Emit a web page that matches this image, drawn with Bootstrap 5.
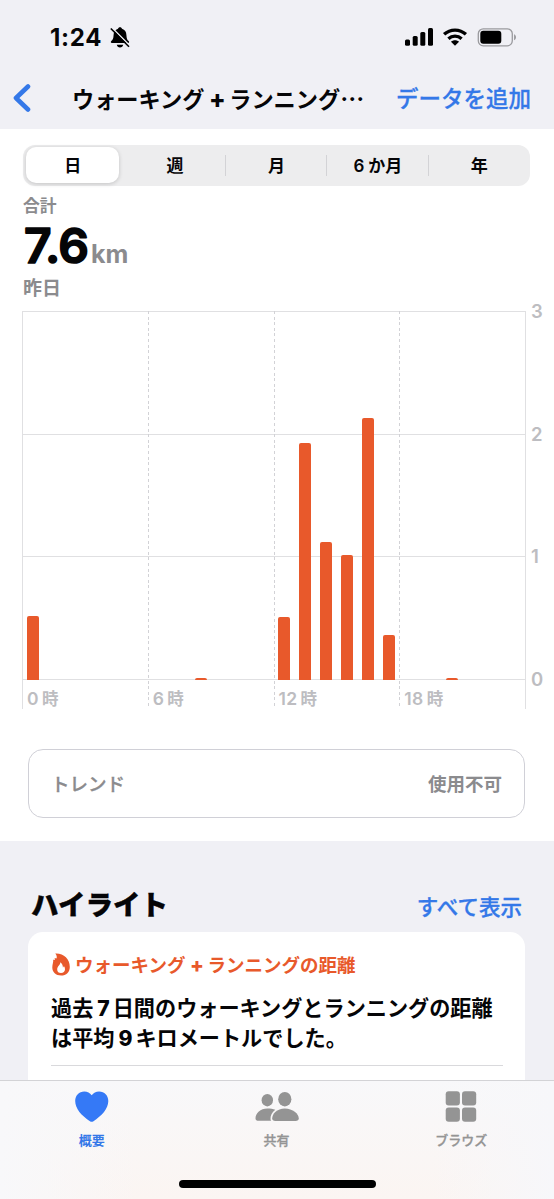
<!DOCTYPE html>
<html lang="ja">
<head>
<meta charset="utf-8">
<meta name="viewport" content="width=device-width, initial-scale=1">
<title>ウォーキング+ランニングの距離</title>
<link rel="stylesheet" href="https://cdn.jsdelivr.net/npm/bootstrap@5.3.0/dist/css/bootstrap.min.css">
<style>
:root { --ink:#050507; --blue:#3478e8; --orange:#e8592b; --panel:#f0f0f5; --muted:#8b8b8e; --axis:#bdbdc1; --rule:#e0e0e2; }
body { font-family: Inter, "Noto Sans CJK JP", sans-serif; color: var(--ink); background: #fff; line-height: 1; }
svg { display: block; flex: none; }
.screen { width: 554px; height: 1199px; overflow: hidden; }
.top-area { background: var(--panel); height: 129px; flex: none; }
.status { height: 70px; padding: 4px 37px 0 50px; }
.clock { font-size: 24px; font-weight: 700; letter-spacing: .75px; width: 60px; white-space: nowrap; padding-top: 1px; }
.title-bar { height: 59px; padding: 0 23px 4px 13px; }
.page-title { font-size: 22.2px; font-weight: 700; margin-left: 41px; padding-top: 2px; white-space: nowrap; }
.plus { margin: 0 3.5px 0 4.5px; font-weight: 800; font-size: 1.1em; line-height: 1; }
.dots { font-family: "Noto Sans CJK JP", sans-serif; font-size: 24px; line-height: 1; }
.blue { color: var(--blue); }
.orange { color: var(--orange); }
.muted { color: var(--muted); }
.medium { font-weight: 500; -webkit-text-stroke: .3px currentColor; }
.bold { font-weight: 700; }
.add-link { font-size: 22.5px; padding-top: 3px; white-space: nowrap; }
.segments { margin: 16px 24px 0 23px; height: 41px; border-radius: 12px; background: #ededee; font-size: 17px; font-weight: 600; flex: none; }
.segment { display: flex; align-items: center; justify-content: center; padding: 2px 0 0; }
.segment.split { background: linear-gradient(#d3d3d6,#d3d3d6) right center / 1px 21px no-repeat; }
.segment.on { background: #fff; margin: 2px 5px 3px 3px; border-radius: 10px; box-shadow: 0 1px 4px rgba(0,0,0,.18); }
.total { padding-left: 23px; height: 125px; flex: none; }
.total svg { overflow: visible; }
.total-value { font-size: 48px; font-weight: 600; stroke: var(--ink); stroke-width: 1.6; stroke-linejoin: round; fill: var(--ink); }
.total-unit { font-size: 25px; font-weight: 700; fill: var(--muted); }
.chart-wrap { height: 399px; padding-left: 22px; flex: none; }
.chart { display: grid; width: 504px; height: 398px; grid-template: 369px 29px / 1fr; }
.rows { grid-area: 1/1; display: grid; grid-template-rows: repeat(3,1fr); border-bottom: 1px solid var(--rule); }
.rows div { border-top: 1px solid var(--rule); }
.quarters { grid-area: 1/1/3/2; display: grid; grid-template-columns: repeat(4,1fr); border-right: 1px solid var(--rule); }
.quarter { padding: 379px 0 0 5px; font-size: 17.5px; font-weight: 600; letter-spacing: .4px; color: var(--axis); background: repeating-linear-gradient(#d2d2d6 0 3px, transparent 3px 5.6px) left top / 1px 100% no-repeat; white-space: nowrap; }
.quarter:first-child { background: linear-gradient(var(--rule),var(--rule)) left top / 1px 100% no-repeat; }
.quarter span { margin-left: 3px; font-size: 16.5px; }
.bars { grid-area: 1/1; display: grid; grid-template-columns: repeat(24,1fr); align-items: end; padding: 0 1px; z-index: 1; height: 369px; }
.bar { width: 12px; margin-left: 4.3px; background: var(--orange); border-radius: 2px 2px 0 0; }
.scale { height: 385px; width: 28px; margin-top: -8px; padding-left: 5px; font-size: 18.5px; font-weight: 600; color: #bdbdc1; line-height: 17px; }
.trend { margin: 39px 29px 0 28px; height: 69px; border: 1.5px solid #d0d0d7; border-radius: 15px; padding: 1px 22px 0; font-size: 18.5px; flex: none; }
.highlights { margin-top: 23px; background: var(--panel); height: 239px; overflow: hidden; flex: none; }
.heading-row { height: 91px; padding: 38px 32px 0 31px; }
.heading-row h2 { font-size: 27.5px; font-weight: 900; margin: 0; line-height: 52px; -webkit-text-stroke: .4px currentColor; }
.heading-row a { font-size: 21.5px; line-height: 57px; text-decoration: none; }
.summary { margin: 0 29px 0 28px; height: 160px; border-radius: 15px 15px 0 0; background: #fff; padding: 20px 22px 0 23px; }
.summary-title { font-size: 18.5px; font-weight: 700; height: 25px; white-space: nowrap; }
.summary-title .label-text { padding-top: 1px; }
.summary p { font-size: 21.15px; font-weight: 700; line-height: 30px; margin: 17px 0 0; padding-bottom: 11px; border-bottom: 1px solid #d9d9dc; white-space: nowrap; height: 72px; }
.num { margin: 0 3px 0 4px; font-weight: 800; }
.tabs { height: 119px; flex: none; border-top: 1px solid #d3d3d6; background: linear-gradient(90deg, #f8f8fa 0, rgba(248,248,250,0) 25% 78%, #f7f7fa), linear-gradient(#f8f8fa, #fbf5f2); }
.tab { height: 80px; padding: 8px 1px 0 0; font-size: 13px; color: #949494; }
.tab.current { color: var(--blue); }
.tab svg { margin-bottom: 9px; }
.indicator { width: 197px; height: 8px; border-radius: 4px; background: #000; margin: 19px auto 0; }
</style>
</head>
<body>
<main class="screen d-flex flex-column">
  <header class="top-area">
    <div class="status d-flex align-items-center">
      <div class="clock">1:24</div>
      <svg width="20" height="21" viewBox="0 0 20 21"><path d="M10 .3c1.100 0 1.800.7 2 1.500 2.900.9 4.300 3 4.400 6.100.2 3.400.8 5 2.200 6.200.9.8.6 2-.5 2H1.900c-1.100 0-1.500-1.200-.6-2C2.900 12.700 3.400 11.200 3.600 7.900 3.700 4.800 5.100 2.700 8 1.800c.2-.8.9-1.500 2-1.500zM6.800 17.800h6.400c-.2 1.600-1.500 2.600-3.200 2.600s-3-1-3.200-2.600z" fill="#000"/><path d="M2 .8 19.500 18.300" stroke="#f0f0f5" stroke-width="1.500"/><path d="M.8 1.500 19 19.700" stroke="#000" stroke-width="1.600"/></svg>
      <div class="d-flex align-items-center ms-auto">
        <svg width="28" height="18" viewBox="0 0 28 18"><g fill="#000"><rect x="0" y="11.500" width="5" height="6.300" rx="1.500"/><rect x="7.700" y="8" width="5" height="9.800" rx="1.500"/><rect x="15.300" y="4" width="5" height="13.800" rx="1.500"/><rect x="23" y="0" width="5" height="17.800" rx="1.500"/></g></svg>
        <svg class="ms-2 me-2" width="28" height="18" viewBox="-1 0 28 18"><g fill="none" stroke="#000" stroke-width="3.300"><path d="M2.100 6.300C8.200.6 17.800.6 23.900 6.300"/><path d="M6.400 10.700c3.700-3.400 9.500-3.400 13.200 0"/></g><path d="M9 13.700c2.200-2 5.800-2 8 0l-4 4z" fill="#000"/></svg>
        <svg width="40" height="19" viewBox="0 0 40 19"><rect x="1.300" y=".8" width="34" height="17" rx="5" fill="none" stroke="#9a9a9e" stroke-width="1.300"/><rect x="3.300" y="2.800" width="21" height="13" rx="3" fill="#000"/><path d="M37.200 6.300c2.200.8 2.200 5.200 0 6z" fill="#8d8d91"/></svg>
      </div>
    </div>
    <nav class="title-bar d-flex align-items-center">
      <svg width="18" height="28" viewBox="0 0 18 28"><path d="M15 2.500 3 14l12 11.500" fill="none" stroke="#3478e8" stroke-width="4.600" stroke-linecap="round" stroke-linejoin="round"/></svg>
      <div class="page-title">ウォーキング<span class="plus">+</span>ランニング<span class="dots">…</span></div>
      <div class="add-link blue medium ms-auto">データを追加</div>
    </nav>
  </header>

  <div class="segments row g-0">
    <div class="col d-flex"><div class="segment on flex-fill">日</div></div>
    <div class="col segment split">週</div>
    <div class="col segment split">月</div>
    <div class="col segment split"><span class="me-1">6</span>か月</div>
    <div class="col segment">年</div>
  </div>

  <section class="total">
    <div class="muted bold" style="font-size:16.8px;padding-top:12px">合計</div>
    <svg width="130" height="58" viewBox="0 0 130 58"><text class="total-value" x="1" y="48" textLength="65">7.6</text><text class="total-unit" x="68" y="48">km</text></svg>
    <div class="muted bold" style="font-size:19px;padding-top:6px">昨日</div>
  </section>

  <section class="chart-wrap d-flex">
    <div class="chart">
      <div class="rows"><div></div><div></div><div></div></div>
      <div class="quarters">
        <div class="quarter">0<span>時</span></div><div class="quarter">6<span>時</span></div><div class="quarter">12<span>時</span></div><div class="quarter">18<span>時</span></div>
      </div>
      <div class="bars" id="bars"></div>
    </div>
    <div class="scale d-flex flex-column justify-content-between"><span>3</span><span>2</span><span>1</span><span>0</span></div>
  </section>

  <div class="trend muted d-flex align-items-center justify-content-between">
    <span class="medium">トレンド</span><span class="bold">使用不可</span>
  </div>

  <section class="highlights">
    <div class="heading-row d-flex justify-content-between">
      <h2>ハイライト</h2><a class="blue medium" href="#">すべて表示</a>
    </div>
    <article class="summary">
      <div class="summary-title orange d-flex align-items-center">
        <svg class="me-1" width="20" height="23" viewBox="0 0 20 23"><path fill-rule="evenodd" fill="#e8592b" d="M4.300.6c8.200-.5 14.500 5.500 14.500 13.300 0 5.200-3.500 8.700-8.700 8.700-5.300 0-8.800-3.300-8.800-8 0-3.400 1.200-5.400.9-7.900 1 .1 1.200.1 1.500.4.400-.5.300-1.300-.3-1.800 1-.2 1.600-.1 2.100.2.600-1.700.2-3.400-1.200-4.900zM9.200 9.200c.6 2.300-3 4-3 7.200 0 2.200 1.500 3.600 3.800 3.600 2.400 0 4-1.500 4-3.800 0-1.300-.4-2.400-1.100-3.200-.2.700-.5 1.200-1 1.500.1-2.200-.9-4.300-2.700-5.300z"/></svg>
        <span class="label-text">ウォーキング<span class="plus">+</span>ランニングの距離</span>
      </div>
      <p>過去<span class="num">7</span>日間のウォーキングとランニングの距離<br>は平均<span class="num">9</span>キロメートルでした。</p>
    </article>
  </section>

  <footer class="tabs">
    <nav class="row g-0 text-center">
      <div class="col tab current d-flex flex-column align-items-center bold"><svg width="36" height="36" viewBox="0 0 36 36"><path fill="#3579f6" d="M17.700 6.300C19.400 4 22 2.600 25.100 2.600c5.300 0 9.200 4 9.200 9.500 0 7.500-6.300 14.800-15.200 20.300-.9.600-1.900.6-2.800 0C7.400 26.900 1.200 19.600 1.200 12.100c0-5.500 3.900-9.500 9.100-9.500 3.100 0 5.700 1.400 7.400 3.700z"/></svg>概要</div>
      <div class="col tab d-flex flex-column align-items-center medium"><svg width="46" height="36" viewBox="0 0 46 36"><g fill="#949494"><ellipse cx="13.300" cy="11.200" rx="5.700" ry="6.200"/><path d="M21.300 20.800c-3.200 2.400-5 5.700-4.800 9.200 0 .7.300 1.300.7 1.800H4.700c-2 0-3.200-.8-3.200-2.300 0-4.900 5-9.900 11.800-9.900 3 0 5.800.4 8 1.200z"/><ellipse cx="30.800" cy="10.200" rx="6.600" ry="7.200"/><path d="M30.800 19.600c7.900 0 14 5.200 14 10 0 1.500-1.200 2.300-3.200 2.300H21.300c-2 0-3.100-.8-3.100-2.300 0-4.800 4.700-10 12.600-10z"/></g></svg>共有</div>
      <div class="col tab d-flex flex-column align-items-center medium"><svg width="32" height="36" viewBox="0 0 32 36"><g fill="#949494"><rect x=".7" y="2.300" width="14.200" height="14.200" rx="3"/><rect x="17" y="2.300" width="14.200" height="14.200" rx="3"/><rect x=".7" y="18.600" width="14.200" height="14.200" rx="3"/><rect x="17" y="18.600" width="14.200" height="14.200" rx="3"/></g></svg>ブラウズ</div>
    </nav>
    <div class="indicator"></div>
  </footer>
</main>
<script src="https://cdn.jsdelivr.net/npm/bootstrap@5.3.0/dist/js/bootstrap.bundle.min.js"></script>
<script>
// distance in km for each hour of the day
const km = [.52,0,0,0,0,0,0,0,.015,0,0,0,.515,1.93,1.125,1.02,2.13,.365,0,0,.02,0,0,0];
document.getElementById('bars').innerHTML = km.map(v => `<div class="bar" style="height:${v * 122.8}px"></div>`).join('');
</script>
</body>
</html>
